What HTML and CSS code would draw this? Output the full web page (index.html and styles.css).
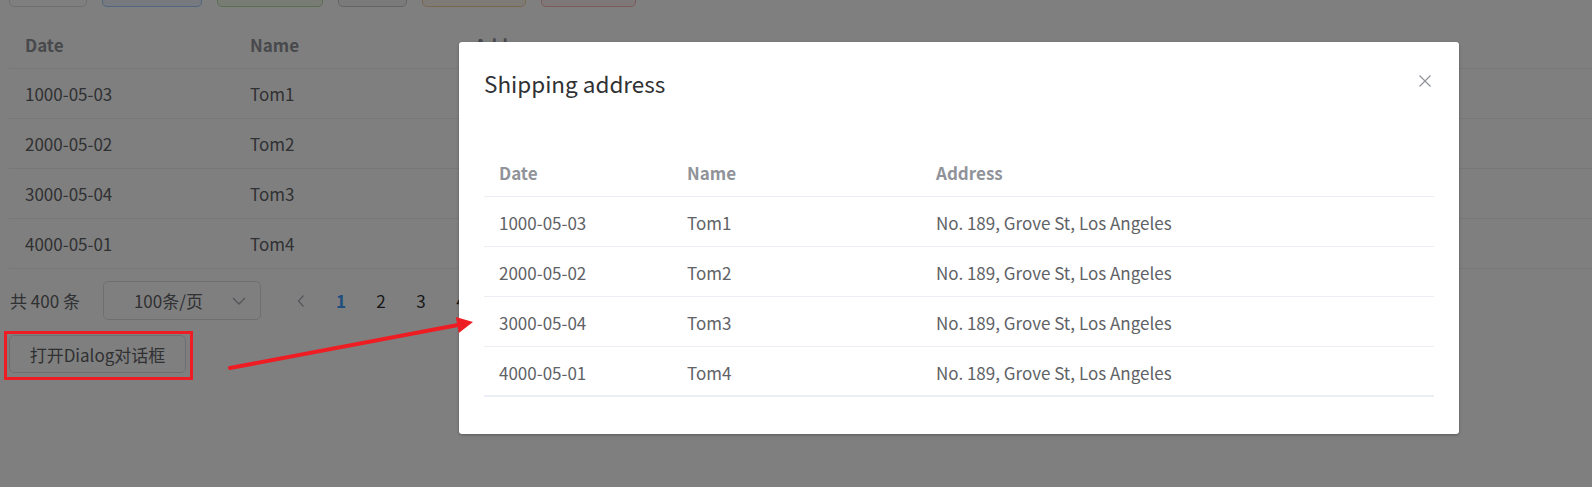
FILE: index.html
```html
<!DOCTYPE html>
<html lang="zh-CN">
<head>
<meta charset="utf-8">
<title>Dialog</title>
<link rel="stylesheet" href="styles.css">
</head>
<body>
<div class="page">
  <div class="btn-row">
    <button class="tb tb-default w1" aria-label="Default"></button>
    <button class="tb tb-primary w2" aria-label="Primary"></button>
    <button class="tb tb-success w3" aria-label="Success"></button>
    <button class="tb tb-info w4" aria-label="Info"></button>
    <button class="tb tb-warning w5" aria-label="Warning"></button>
    <button class="tb tb-danger w6" aria-label="Danger"></button>
  </div>

  <table class="bg-table">
    <colgroup><col class="bc1"><col class="bc2"><col></colgroup>
    <thead><tr><th>Date</th><th>Name</th><th>Address</th></tr></thead>
    <tbody>
      <tr><td>1000-05-03</td><td>Tom1</td><td></td></tr>
      <tr><td>2000-05-02</td><td>Tom2</td><td></td></tr>
      <tr><td>3000-05-04</td><td>Tom3</td><td></td></tr>
      <tr><td>4000-05-01</td><td>Tom4</td><td></td></tr>
    </tbody>
  </table>

  <div class="pagination">
    <span class="total">共 400 条</span>
    <div class="sizes">
      <span class="sizes-text">100条/页</span>
      <svg class="chev" width="14" height="8" viewBox="0 0 14 8"><polyline points="1,1 7,7 13,1" fill="none" stroke="#a8abb2" stroke-width="1.3"/></svg>
    </div>
    <span class="prev"><svg width="8" height="12" viewBox="0 0 8 12"><polyline points="6.5,0.5 1.5,6 6.5,11.5" fill="none" stroke="#a8abb2" stroke-width="1.2"/></svg></span>
    <ul class="pager">
      <li class="active">1</li><li>2</li><li>3</li><li>4</li>
    </ul>
  </div>

  <button class="open-btn">打开Dialog对话框</button>
</div>

<div class="overlay"></div>

<div class="dialog">
  <div class="dlg-header">
    <span class="dlg-title">Shipping address</span>
    <svg class="dlg-close" width="12" height="12" viewBox="0 0 12 12"><path d="M0.5 0.5 L11.5 11.5 M11.5 0.5 L0.5 11.5" stroke="#909399" stroke-width="1.2" fill="none"/></svg>
  </div>
  <div class="dlg-body">
    <table class="dlg-table">
      <colgroup><col class="dc1"><col class="dc2"><col></colgroup>
      <thead><tr><th>Date</th><th>Name</th><th>Address</th></tr></thead>
      <tbody>
        <tr><td>1000-05-03</td><td>Tom1</td><td>No. 189, Grove St, Los Angeles</td></tr>
        <tr><td>2000-05-02</td><td>Tom2</td><td>No. 189, Grove St, Los Angeles</td></tr>
        <tr><td>3000-05-04</td><td>Tom3</td><td>No. 189, Grove St, Los Angeles</td></tr>
        <tr><td>4000-05-01</td><td>Tom4</td><td>No. 189, Grove St, Los Angeles</td></tr>
      </tbody>
    </table>
  </div>
</div>

<div class="mark-box"></div>
<svg class="mark-arrow" width="1592" height="487" viewBox="0 0 1592 487">
  <line x1="230" y1="368" x2="458" y2="325" stroke="#ee1d24" stroke-width="4" stroke-linecap="round"/>
  <polygon points="473,322 455.8,317.1 458.8,332.9" fill="#ee1d24"/>
</svg>
</body>
</html>
```
FILE: styles.css
```css
html, body {
  margin: 0;
  padding: 0;
}
body {
  width: 1592px;
  height: 487px;
  overflow: hidden;
  background: #ffffff;
  position: relative;
  font-family: "Noto Sans CJK SC", "Noto Sans", sans-serif;
  font-size: 17px;
  color: #606266;
}
.page {
  padding-left: 9px;
}

/* top buttons (mostly scrolled out of view) */
.btn-row {
  display: flex;
  gap: 15px;
  margin-top: -31px;
  height: 38px;
}
.tb {
  height: 38px;
  box-sizing: border-box;
  border: 1px solid #dcdfe6;
  border-radius: 5px;
  background: #fff;
  padding: 0;
}
.w1 { width: 78px; }
.w2 { width: 100px; }
.w3 { width: 106px; }
.w4 { width: 69px; }
.w5 { width: 104px; }
.w6 { width: 95px; }
.tb-primary { background: #ecf5ff; border-color: #a0cfff; }
.tb-success { background: #f0f9eb; border-color: #b3e19d; }
.tb-info { background: #f4f4f5; border-color: #c8c9cc; }
.tb-warning { background: #fdf6ec; border-color: #f3d19e; }
.tb-danger { background: #fef0f0; border-color: #fab6b6; }

/* background table */
.bg-table {
  margin-top: 13px;
  width: 1583px;
  table-layout: fixed;
  border-collapse: separate;
  border-spacing: 0;
}
.bc1, .bc2 { width: 225px; }
.bg-table th {
  text-align: left;
  font-weight: 700;
  color: #909399;
  line-height: 23px;
  padding: 13px 0 12px 16px;
  border-bottom: 1px solid #ebeef5;
  white-space: nowrap;
}
.bg-table td {
  height: 23px;
  line-height: 23px;
  padding: 13px 0 13px 16px;
  border-bottom: 1px solid #ebeef5;
  white-space: nowrap;
}

/* pagination */
.pagination {
  margin-top: 12px;
  height: 39px;
  display: flex;
  align-items: center;
}
.total {
  line-height: 39px;
  margin-right: 23px;
  margin-left: 1px;
  color: #606266;
}
.sizes {
  width: 158px;
  height: 39px;
  box-sizing: border-box;
  border: 1px solid #dcdfe6;
  border-radius: 5px;
  display: flex;
  align-items: center;
  padding-left: 30px;
}
.sizes-text {
  color: #606266;
  line-height: 37px;
}
.chev {
  margin-left: auto;
  margin-right: 14px;
}
.prev {
  width: 40px;
  margin-left: 20px;
  height: 39px;
  display: flex;
  align-items: center;
  justify-content: center;
}
.pager {
  list-style: none;
  margin: 0;
  padding: 0;
  display: flex;
}
.pager li {
  width: 40px;
  text-align: center;
  line-height: 39px;
  color: #303133;
}
.pager li.active {
  color: #409eff;
  font-weight: 700;
}

/* open dialog button */
.open-btn {
  display: block;
  margin-top: 15px;
  width: 177px;
  height: 38px;
  box-sizing: border-box;
  border: 1px solid #dcdfe6;
  border-radius: 5px;
  background: #ffffff;
  color: #606266;
  font-family: inherit;
  font-size: 17px;
  padding: 0;
}

/* modal overlay */
.overlay {
  position: absolute;
  inset: 0;
  background: rgba(0, 0, 0, 0.5);
  z-index: 1;
}

/* dialog */
.dialog {
  position: absolute;
  left: 459px;
  top: 42px;
  width: 1000px;
  background: #ffffff;
  border-radius: 3px;
  box-shadow: 0 1px 3px rgba(0, 0, 0, 0.3);
  z-index: 2;
}
.dlg-header {
  position: relative;
  padding: 26px 26px 0 25px;
  height: 30px;
}
.dlg-title {
  font-size: 22.5px;
  line-height: 30px;
  color: #303133;
}
.dlg-close {
  position: absolute;
  top: 33px;
  right: 28px;
}
.dlg-body {
  padding: 49px 25px 37px 25px;
}
.dlg-table {
  width: 100%;
  table-layout: fixed;
  border-collapse: separate;
  border-spacing: 0;
  border-bottom: 1px solid #ebeef5;
}
.dc1 { width: 188px; }
.dc2 { width: 249px; }
.dlg-table th {
  text-align: left;
  font-weight: 700;
  color: #909399;
  line-height: 23px;
  padding: 14px 0 12px 15px;
  border-bottom: 1px solid #ebeef5;
  white-space: nowrap;
}
.dlg-table td {
  line-height: 23px;
  padding: 14px 0 12px 15px;
  border-bottom: 1px solid #ebeef5;
  color: #606266;
  white-space: nowrap;
}
.dlg-table tbody tr:last-child td {
  padding-bottom: 11px;
}

/* annotations */
.mark-box {
  position: absolute;
  left: 4px;
  top: 331px;
  width: 183px;
  height: 43px;
  border: 3px solid #ee1d24;
  z-index: 3;
}
.mark-arrow {
  position: absolute;
  left: 0;
  top: 0;
  z-index: 3;
}
```
